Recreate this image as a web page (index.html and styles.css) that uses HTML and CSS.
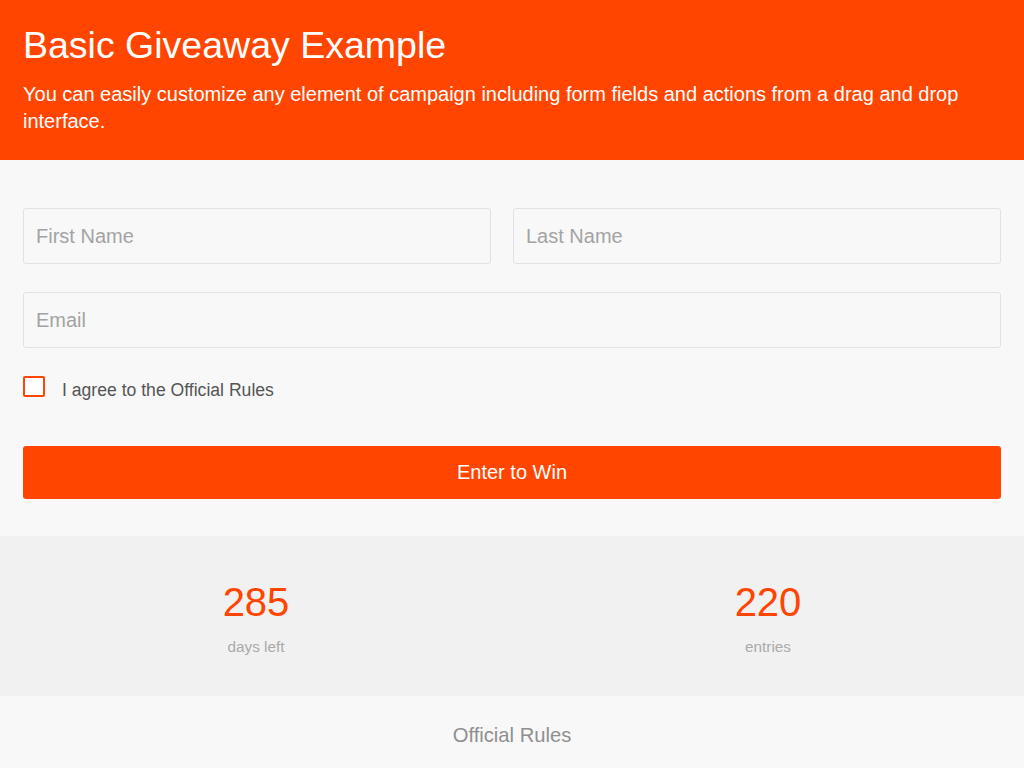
FILE: index.html
```html
<!DOCTYPE html>
<html>
<head>
<meta charset="utf-8">
<link rel="stylesheet" href="styles.css">
</head>
<body>
<header class="hero">
  <h1 class="hero-title">Basic Giveaway Example</h1>
  <p class="hero-text">You can easily customize any element of campaign including form fields and actions from a drag and drop interface.</p>
</header>
<main class="form-area">
  <div class="row two">
    <input class="field" type="text" placeholder="First Name">
    <input class="field" type="text" placeholder="Last Name">
  </div>
  <div class="row">
    <input class="field" type="text" placeholder="Email">
  </div>
  <label class="agree"><span class="box"></span><span class="agree-text">I agree to the Official Rules</span></label>
  <button class="submit">Enter to Win</button>
</main>
<section class="stats">
  <div class="stat"><div class="num">285</div><div class="label">days left</div></div>
  <div class="stat"><div class="num">220</div><div class="label">entries</div></div>
</section>
<footer class="footer">Official Rules</footer>
</body>
</html>
```

FILE: styles.css
```css
* { box-sizing: border-box; }
html, body { margin: 0; padding: 0; }
body {
  font-family: "Liberation Sans", Arial, sans-serif;
  background: #f8f8f8;
  width: 1024px;
  height: 768px;
  overflow: hidden;
}
.hero {
  background: #ff4500;
  color: #fff;
  height: 160px;
  padding: 24px 23px 0 23px;
}
.hero-title {
  margin: 0;
  font-weight: normal;
  font-size: 37.5px;
  line-height: 42px;
}
.hero-text {
  margin: 15px 0 0 0;
  font-size: 20px;
  line-height: 27px;
}
.form-area {
  background: #f8f8f8;
  height: 376px;
  padding: 48px 23px 0 23px;
}
.row {
  display: flex;
  gap: 22px;
  margin-bottom: 28px;
}
.row.two {
  display: grid;
  grid-template-columns: 468px 1fr;
}
.field {
  flex: 1;
  height: 56px;
  border: 1px solid #e2e2e2;
  border-radius: 3px;
  background: #f8f8f8;
  padding: 0 12px;
  font-family: "Liberation Sans", Arial, sans-serif;
  font-size: 20px;
  color: #333;
  outline: none;
}
.field::placeholder { color: #a3a3a3; }
.agree {
  display: flex;
  align-items: center;
  height: 22px;
  margin-top: -1px;
}
.box {
  width: 22px;
  height: 21px;
  border: 2px solid #ff4500;
  border-radius: 2px;
  background: #fff;
  flex: none;
}
.agree-text {
  margin-left: 17px;
  font-size: 17.6px;
  color: #555;
  position: relative;
  top: 4px;
}
.submit {
  display: block;
  width: 100%;
  height: 53px;
  margin-top: 49px;
  background: #ff4500;
  border: none;
  border-radius: 3px;
  color: #fff;
  font-family: "Liberation Sans", Arial, sans-serif;
  font-size: 20px;
}
.stats {
  background: #f1f1f1;
  height: 160px;
  display: grid;
  grid-template-columns: 1fr 1fr;
  padding-top: 43px;
}
.stat { text-align: center; }
.num {
  color: #ff4500;
  font-size: 40px;
  line-height: 46px;
}
.label {
  margin-top: 13px;
  color: #aaa;
  font-size: 15.3px;
}
.footer {
  background: #f8f8f8;
  height: 72px;
  text-align: center;
  color: #8f8f8f;
  font-size: 20.2px;
  padding-top: 28px;
}
```
